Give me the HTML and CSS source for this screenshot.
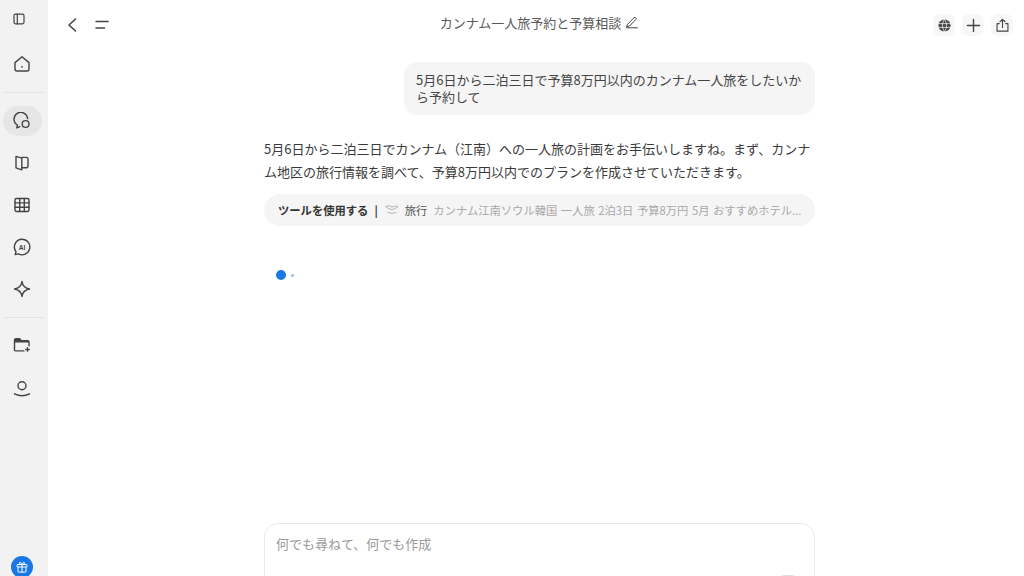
FILE: index.html
```html
<!DOCTYPE html>
<html lang="ja">
<head>
  <meta charset="UTF-8" />
  <meta name="viewport" content="width=device-width, initial-scale=1.0"/>
  <title>カンナム一人旅予約と予算相談</title>
  <link rel="stylesheet" href="styles.css">
</head>
<body>

  <!-- Barra lateral -->
  <aside class="sidebar">
    <a class="side-top" href="#">
      <svg class="icon-sm" viewBox="0 0 12 12"><rect x="1" y="1.200" width="10" height="9.600" rx="1.500"/><path d="M4.300 1.200v9.600"/></svg>
    </a>
    <a class="side-item side-home" href="#">
      <svg viewBox="0 0 18 18"><path d="M2 7.600 9 1.800l7 5.800v6.400a2 2 0 0 1-2 2H4a2 2 0 0 1-2-2z"/><circle class="fill" cx="9" cy="11.800" r=".9"/></svg>
    </a>
    <div class="side-line"></div>
    <a class="side-item active" href="#">
      <span class="pill">
        <svg viewBox="0 0 18 18"><path d="M14.600 6.600A6.800 6.800 0 1 0 4.400 13l-.6 2.800 3-1.200"/><circle cx="12.600" cy="12" r="3.400"/></svg>
      </span>
    </a>
    <a class="side-item" href="#">
      <svg viewBox="0 0 18 18"><path d="M8.800 4.200 3 2.400v11.400l5.800 2z"/><path d="M8.800 3.400h4.700a1.500 1.500 0 0 1 1.500 1.500v7.400a1.500 1.500 0 0 1-1.500 1.500H8.800"/></svg>
    </a>
    <a class="side-item" href="#">
      <svg viewBox="0 0 18 18"><rect x="2" y="2.500" width="14" height="13" rx="1.400"/><path d="M2 6.900h14M2 11.200h14M6.700 2.500v13M11.300 2.500v13"/></svg>
    </a>
    <a class="side-item" href="#">
      <svg viewBox="0 0 18 18"><path d="M9 1.200a7.800 7.800 0 1 1-3.600 14.700l-3.200.7.800-2.900A7.800 7.800 0 0 1 9 1.200z"/><text class="ai-mark" x="9" y="11.500" text-anchor="middle">AI</text></svg>
    </a>
    <a class="side-item" href="#">
      <svg viewBox="0 0 18 18"><path d="M9 1.500c.6 4.300 3 6.800 7.500 7.500-4.500.7-6.900 3.200-7.500 7.500-.6-4.300-3-6.800-7.500-7.500C6 8.300 8.400 5.800 9 1.500z"/></svg>
    </a>
    <div class="side-line"></div>
    <a class="side-item side-folder" href="#">
      <svg viewBox="0 0 18 18"><path d="M1.500 14V4a1.200 1.200 0 0 1 1.200-1.200h4L8.200 4.600h6.600A1.200 1.200 0 0 1 16 5.800v8.200a.9.900 0 0 1-.9.900H2.500a1 1 0 0 1-1-1z"/><path class="fill" d="M1.500 3h5.300l1.500 1.800H16v1.800H1.500z"/><circle class="knock" cx="14.500" cy="13.500" r="3.400"/><path d="M14.500 11.700v3.600M12.700 13.500h3.600"/></svg>
    </a>
    <a class="side-item" href="#">
      <svg viewBox="0 0 18 18"><circle cx="9" cy="5.800" r="4"/><path d="M1.500 13.800c4.400 2.200 10.600 2.200 15 0"/></svg>
    </a>
    <a class="gift" href="#">
      <svg viewBox="0 0 14 14"><rect x="2" y="4.500" width="10" height="2.500" rx=".6"/><path d="M3 7v4.500a.6.600 0 0 0 .6.600h6.800a.6.600 0 0 0 .6-.600V7M7 4.500v7.600M7 4.500C5.500 4.500 4.500 4 4.500 3S6.200 1.700 7 4.500zM7 4.500c1.500 0 2.500-.5 2.500-1.500S7.800 1.700 7 4.500z"/></svg>
    </a>
  </aside>

  <main class="main">
    <!-- Encabezado -->
    <header class="topbar">
      <div class="top-left">
        <a class="back" href="#">
          <svg viewBox="0 0 12 16"><path d="M9.500 2 3 8l6.500 6"/></svg>
        </a>
        <a class="lines" href="#">
          <svg viewBox="0 0 14 10"><path d="M1 1.500h12M1 8h8.500"/></svg>
        </a>
      </div>
      <div class="top-title">
        <span>カンナム一人旅予約と予算相談</span>
        <svg viewBox="0 0 14 14"><path d="M2.500 9.300 9 2.800a1.200 1.200 0 0 1 1.800 0 1.200 1.200 0 0 1 0 1.800l-6.500 6.500-2.300.5zM1.500 12.800h11"/></svg>
      </div>
      <div class="top-right">
        <a class="top-btn" href="#">
          <svg viewBox="0 0 16 16"><circle class="fill" cx="8" cy="8" r="6.500"/><path class="cut" d="M1.500 6h13M1.500 10h13M8 1.500c-3 4-3 9 0 13M8 1.500c3 4 3 9 0 13"/></svg>
        </a>
        <a class="top-btn" href="#">
          <svg class="icon-plus" viewBox="0 0 16 16"><path d="M8 1.500v13M1.500 8h13"/></svg>
        </a>
        <a class="top-btn" href="#">
          <svg viewBox="0 0 16 16"><path d="M4.500 6H2.200v8h11.600V6h-2.300M8 10V1.500M5.300 4 8 1.500 10.700 4"/></svg>
        </a>
      </div>
    </header>

    <!-- Conversacion -->
    <section class="thread">
      <div class="user-msg">5月6日から二泊三日で予算8万円以内のカンナム一人旅をしたいから予約して</div>
      <p class="bot-msg">5月6日から二泊三日でカンナム（江南）への一人旅の計画をお手伝いしますね。まず、カンナム地区の旅行情報を調べて、予算8万円以内でのプランを作成させていただきます。</p>
      <div class="tool-row">
        <strong>ツールを使用する</strong>
        <span class="tool-sep">|</span>
        <svg viewBox="0 0 14 14"><path d="M1 3.500c3-1.500 5-.5 6 .8 1.500-1.300 3.500-1.500 6-.8-1.500 1-2.500 2.500-6 3-2.500-.3-4.500-1.300-6-3zM3 9.500c2.500 1 5.500 1 8 0"/></svg>
        <span class="tool-name">旅行</span>
        <span class="tool-query">カンナム江南ソウル韓国 一人旅 2泊3日 予算8万円 5月 おすすめホテル...</span>
      </div>
      <div class="loader">
        <span class="dot-big"></span>
        <span class="dot-small"></span>
      </div>
    </section>

    <!-- Caja de texto -->
    <div class="composer-wrap">
      <div class="composer">
        <span class="placeholder">何でも尋ねて、何でも作成</span>
        <span class="send"></span>
      </div>
    </div>
  </main>

</body>
</html>
```

FILE: styles.css
```css
body {
  margin: 0;
  height: 576px;
  overflow: hidden;
  display: flex;
  font-family: "Noto Sans CJK JP", "Noto Sans", sans-serif;
  font-size: 13px;
  color: #3a3a3a;
  background-color: white;
}

a {
  color: inherit;
  text-decoration: none;
}

svg {
  fill: none;
  stroke: #444;
  stroke-width: 1.4;
  stroke-linecap: round;
  stroke-linejoin: round;
}

svg .fill {
  fill: #444;
  stroke: none;
}

svg .cut {
  stroke: #f2f2f2;
  stroke-width: 1;
}

svg .knock {
  fill: #f2f2f2;
  stroke: none;
}

.sidebar {
  width: 48px;
  flex: none;
  height: 576px;
  display: flex;
  flex-direction: column;
  background-color: #f2f2f2;
}

.side-top {
  height: 38px;
  width: 38px;
  display: flex;
  justify-content: center;
  align-items: center;
}

.icon-sm {
  width: 12px;
  height: 12px;
  stroke-width: 1.200;
}

.side-item {
  height: 42px;
  width: 44px;
  display: flex;
  justify-content: center;
  align-items: center;
}

.side-item svg {
  width: 18px;
  height: 18px;
}

.side-home {
  margin-top: 5px;
}

.side-folder {
  margin-top: -1px;
  margin-bottom: 2px;
}

.side-line {
  height: 1px;
  margin: 7px 4px;
  background-color: #e3e3e3;
}

.pill {
  width: 39px;
  height: 30px;
  border-radius: 15px;
  background-color: #e6e6e6;
  display: flex;
  justify-content: center;
  align-items: center;
}

.ai-mark {
  font-family: "Liberation Sans", sans-serif;
  font-size: 6.500px;
  font-weight: 700;
  fill: #444;
  stroke: none;
}

.gift {
  width: 22px;
  height: 22px;
  margin: auto 0 -2px 11px;
  border-radius: 50%;
  background-color: #1a78e6;
  display: flex;
  justify-content: center;
  align-items: center;
}

.gift svg {
  width: 14px;
  height: 14px;
  stroke: white;
  stroke-width: 1;
}

.main {
  flex: 1;
  min-width: 0;
  height: 576px;
  padding-left: 7px;
  display: flex;
  flex-direction: column;
}

.topbar {
  height: 46px;
  flex: none;
  padding: 0 11px;
  display: grid;
  grid-template-columns: 1fr auto 1fr;
  align-items: center;
}

.top-left {
  display: flex;
  align-items: center;
  gap: 17px;
  padding-top: 4px;
}

.back svg {
  width: 12px;
  height: 16px;
  display: block;
  stroke-width: 1.600;
}

.lines svg {
  width: 14px;
  height: 10px;
  display: block;
  stroke-width: 1.500;
}

.top-title {
  display: flex;
  align-items: center;
  gap: 4px;
  color: #5a5a5a;
  margin-top: -2px;
}

.top-title svg {
  width: 14px;
  height: 14px;
  stroke-width: 1;
}

.top-right {
  display: flex;
  justify-content: flex-end;
  gap: 7px;
  margin-top: 4px;
}

.top-btn {
  width: 22px;
  height: 22px;
  border-radius: 7px;
  background-color: #f7f7f7;
  display: flex;
  justify-content: center;
  align-items: center;
}

.top-btn svg {
  width: 15px;
  height: 15px;
  stroke-width: 1.200;
}

.top-btn svg .cut {
  stroke: #f7f7f7;
  stroke-width: .8;
}

.top-btn .icon-plus {
  stroke-width: 1.500;
}

.thread {
  flex: 1;
  width: 551px;
  margin: 0 auto;
  min-height: 0;
  padding-top: 16px;
  display: flex;
  flex-direction: column;
}

.user-msg {
  width: 387px;
  align-self: flex-end;
  padding: 10px 12px;
  border-radius: 14px;
  background-color: #f5f5f5;
  line-height: 16.500px;
  color: #444;
}

.bot-msg {
  margin: 22px 0 0;
  line-height: 23px;
}

.tool-row {
  height: 32px;
  margin-top: 11px;
  padding: 0 12px 0 14px;
  border-radius: 16px;
  background-color: #f5f5f5;
  display: flex;
  align-items: center;
  font-size: 11.300px;
}

.tool-row strong {
  font-weight: 700;
  color: #333;
  flex: none;
}

.tool-sep {
  margin: 0 7px 0 6px;
  font-weight: 700;
  flex: none;
}

.tool-row svg {
  width: 14px;
  height: 14px;
  flex: none;
  stroke: #aaa;
  stroke-width: .9;
}

.tool-name {
  margin: 0 6px;
  color: #555;
  flex: none;
}

.tool-query {
  flex: 1;
  min-width: 0;
  white-space: nowrap;
  word-spacing: 1px;
  color: #a8a8a8;
}

.loader {
  margin: 44px 0 0 12px;
  display: flex;
  align-items: center;
  gap: 5px;
}

.dot-big {
  width: 10px;
  height: 10px;
  border-radius: 50%;
  background-color: #1a78e6;
}

.dot-small {
  width: 3px;
  height: 3px;
  border-radius: 50%;
  background-color: #9dbfe6;
}

.composer-wrap {
  height: 53px;
  flex: none;
  overflow: hidden;
  width: 551px;
  margin: 0 auto;
}

.composer {
  height: 100px;
  box-sizing: border-box;
  padding: 11px 11px;
  border: 1px solid #e8e8e8;
  border-radius: 14px;
  display: flex;
  justify-content: space-between;
}

.placeholder {
  color: #999;
  line-height: 18px;
}

.send {
  width: 16px;
  height: 16px;
  margin: 40px 6px 0 0;
  border: 1px solid #ddd;
  border-radius: 5px;
}
```
